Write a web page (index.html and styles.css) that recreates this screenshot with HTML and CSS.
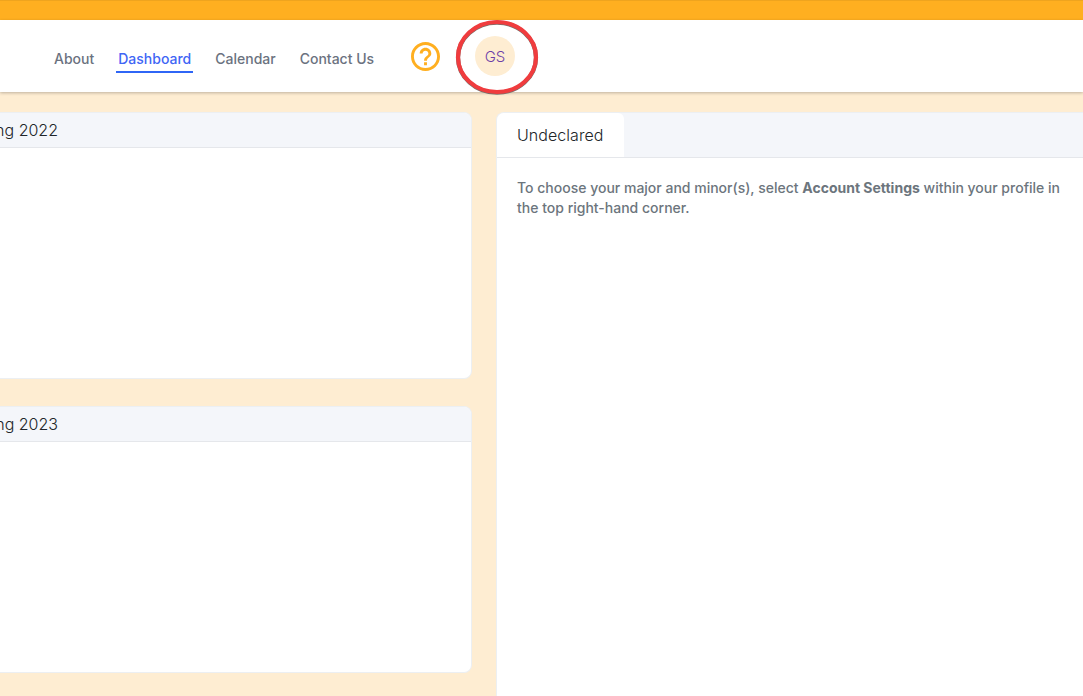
FILE: index.html
```html
<!DOCTYPE html>
<html lang="en">
<head>
<meta charset="utf-8">
<title>Dashboard</title>
<link rel="stylesheet" href="styles.css">
</head>
<body>
<div class="topbar"></div>
<header class="header">
  <nav class="nav">
    <a class="nav-link">About</a>
    <a class="nav-link active">Dashboard</a>
    <a class="nav-link">Calendar</a>
    <a class="nav-link">Contact Us</a>
  </nav>
  <svg class="help" viewBox="2 2 20 20"><path fill="#ffaf20" d="M11 18h2v-2h-2v2zm1-16C6.48 2 2 6.48 2 12s4.480 10 10 10 10-4.480 10-10S17.520 2 12 2zm0 18c-4.410 0-8-3.590-8-8s3.590-8 8-8 8 3.590 8 8-3.590 8-8 8zm0-14c-2.210 0-4 1.790-4 4h2c0-1.100.9-2 2-2s2 .9 2 2c0 2-3 1.750-3 5h2c0-2.250 3-2.500 3-5 0-2.210-1.790-4-4-4z"/></svg>
  <div class="avatar">GS
    <svg class="ring" viewBox="0 0 86 78"><ellipse class="ring-shade" cx="43" cy="39.700" rx="39" ry="35"/><ellipse class="ring-line" cx="43" cy="39" rx="39" ry="35"/></svg>
  </div>
</header>
<main class="main">
  <div class="terms">
    <section class="term"><h2 class="term-head"><span class="term-name">Spring 2022</span></h2></section>
    <section class="term"><h2 class="term-head"><span class="term-name">Spring 2023</span></h2></section>
  </div>
  <section class="panel">
    <div class="tabs"><div class="tab">Undeclared</div></div>
    <p class="note">To choose your major and minor(s), select <b>Account Settings</b> within your profile in the top right-hand corner.</p>
  </section>
</main>
</body>
</html>
```

FILE: styles.css
```css
* { box-sizing: border-box; }
body {
  margin: 0;
  height: 696px;
  overflow: hidden;
  display: flex;
  flex-direction: column;
  background: #feedd2;
  font-family: Inter, "Liberation Sans", sans-serif;
  color: #212529;
}
.topbar {
  height: 20px;
  flex: none;
  background: #ffaf20;
  border-top: 1px solid #efa41e;
}
.header {
  height: 72px;
  flex: none;
  display: flex;
  align-items: flex-start;
  position: relative;
  padding-left: 52px;
  background: #fff;
  box-shadow: 0 1px 3px rgba(0, 0, 0, .25);
}
.nav { display: flex; gap: 20px; width: 324px; padding-top: 27px; }
.nav-link {
  height: 26px;
  padding: 0 2px;
  font-size: 14px;
  font-weight: 500;
  line-height: 24px;
  letter-spacing: 0;
  white-space: nowrap;
  color: #6b7280;
}
.active { color: #3f66f5; border-bottom: 2px solid #2f66f6; }
.help { width: 29px; height: 29px; margin: 22px 0 0 35px; flex: none; }
.avatar {
  position: relative;
  width: 40px;
  height: 40px;
  margin: 16px 0 0 35px;
  border-radius: 50%;
  background: #feedd2;
  color: #6d3fa8;
  font-size: 15px;
  font-weight: 350;
  line-height: 41px;
  text-align: center;
}
.ring { position: absolute; left: -21px; top: -18px; width: 86px; height: 78px; }
.ring-shade { fill: none; stroke: #77706b; stroke-width: 4.200; }
.ring-line { fill: none; stroke: #f03c3e; stroke-width: 4.200; }
.main { flex: 1; display: flex; gap: 24px; padding-top: 20px; min-height: 0; }
.terms { width: 472px; flex: none; display: flex; flex-direction: column; gap: 27px; }
.term {
  height: 267px;
  flex: none;
  background: #fff;
  border: 1px solid #eceff2;
  border-left: 0;
  border-radius: 0 8px 8px 0;
  overflow: hidden;
}
.term-head {
  height: 35px;
  margin: 0;
  background: #f4f6fa;
  border-bottom: 1px solid #e5e7eb;
  font-size: 16px;
  font-weight: 350;
  line-height: 35px;
}
.term-name {
  display: flex;
  justify-content: flex-end;
  width: 58px;
  white-space: nowrap;
}
.panel {
  flex: 1;
  height: 600px;
  background: #fff;
  border: 1px solid #eceff2;
  border-right: 0;
  border-radius: 8px 0 0 0;
  overflow: hidden;
}
.tabs { height: 45px; background: #f4f6fa; border-bottom: 1px solid #e5e7eb; display: flex; }
.tab {
  width: 127px;
  padding-left: 20px;
  background: #fff;
  border-radius: 6px 6px 0 0;
  font-size: 16px;
  font-weight: 350;
  letter-spacing: .05px;
  line-height: 45px;
}
.note {
  margin: 20px 0 0 20px;
  width: 550px;
  font-size: 14px;
  font-weight: 500;
  line-height: 20px;
  color: #6c757d;
}
.note b { font-weight: 700; }
```
